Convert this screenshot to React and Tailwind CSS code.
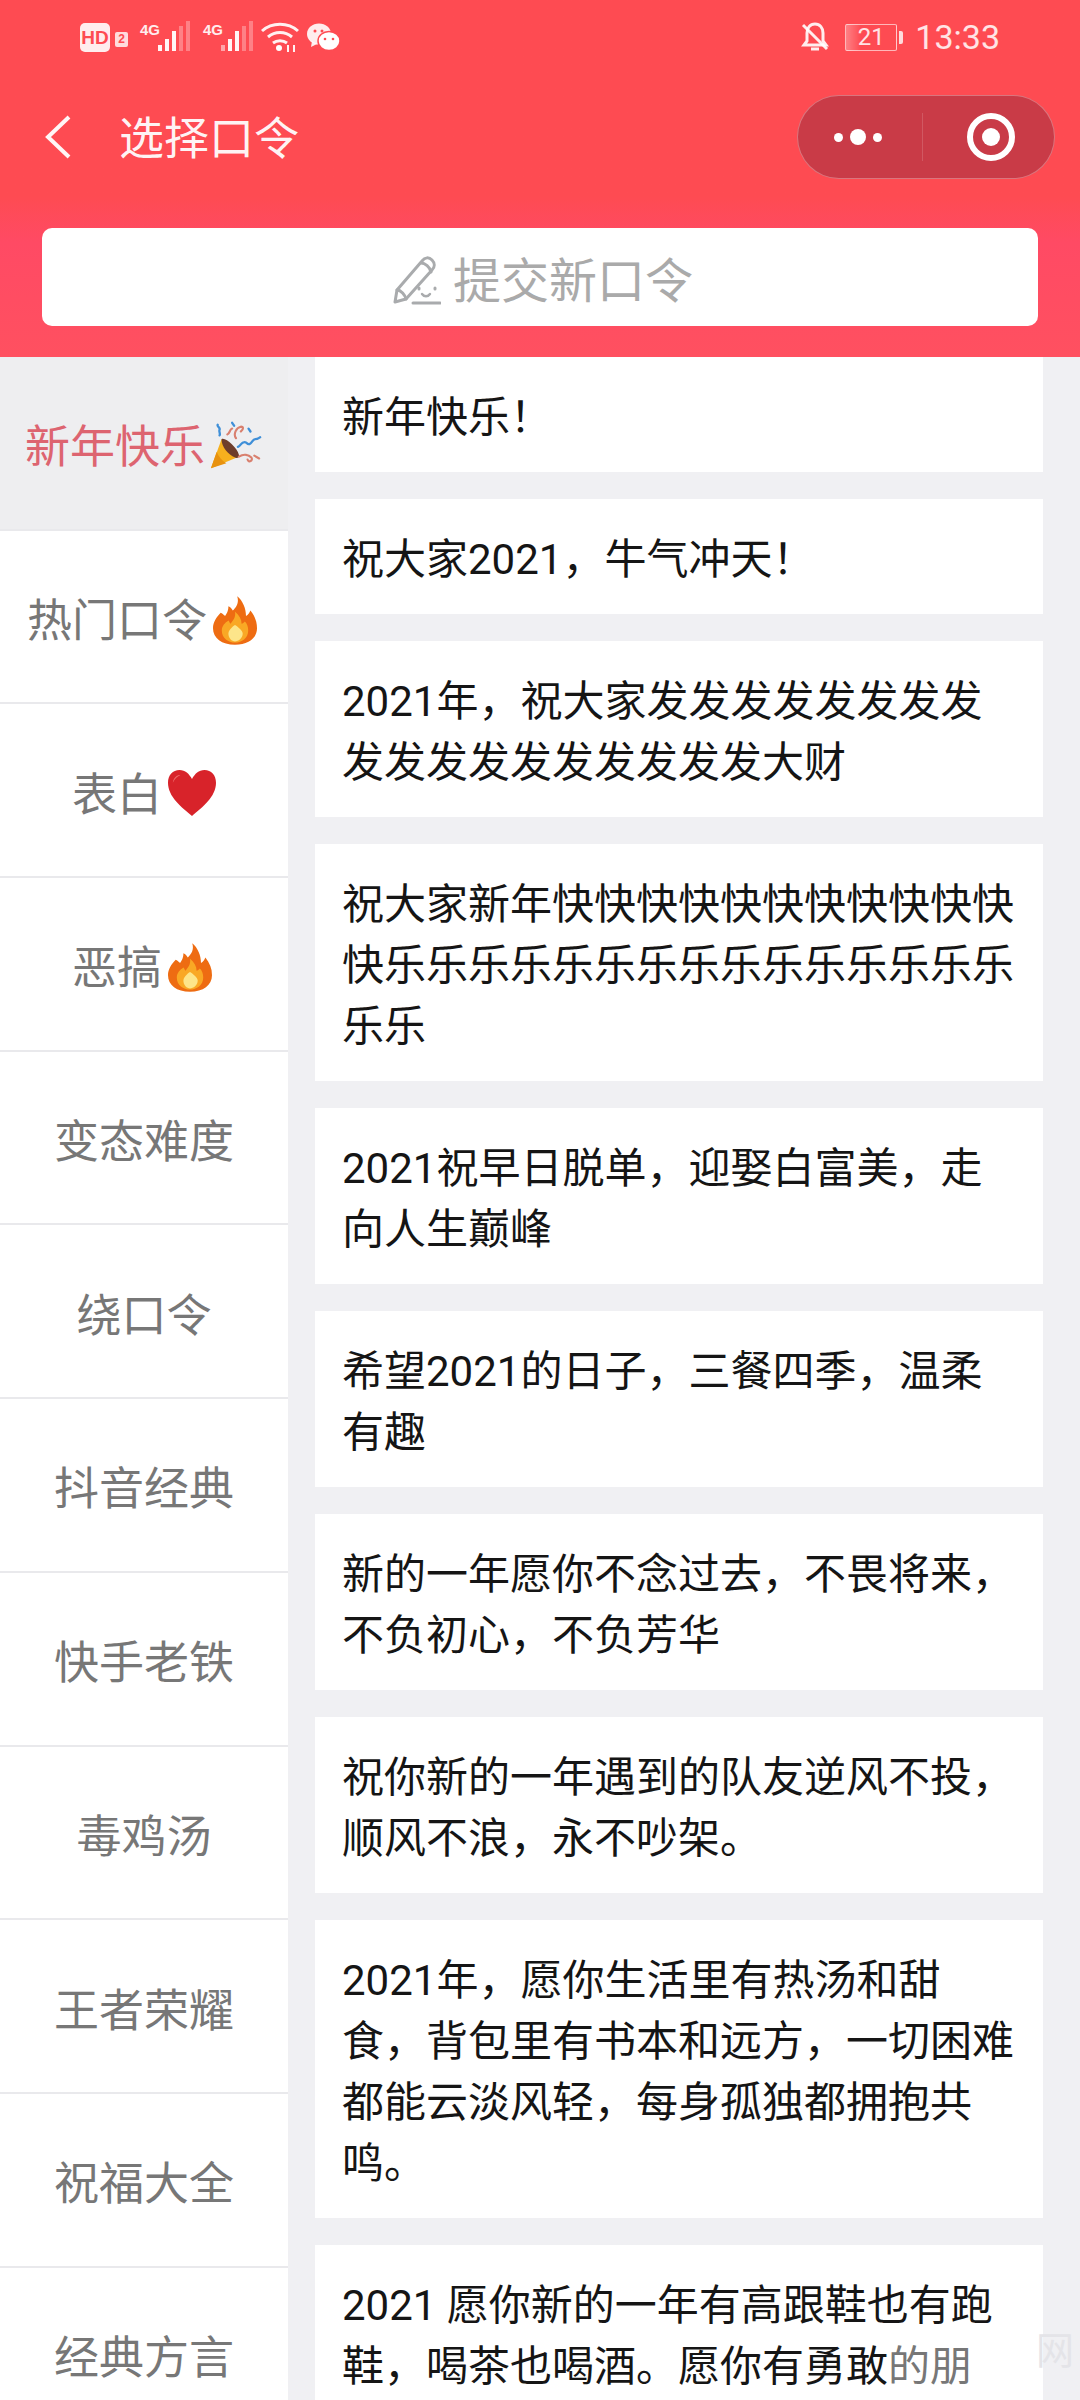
const FONT = "font-['Noto_Sans','Noto_Sans_CJK_SC',sans-serif]";

const menu = [
  { label: "新年快乐", icon: "party", active: true },
  { label: "热门口令", icon: "fire" },
  { label: "表白", icon: "heart" },
  { label: "恶搞", icon: "fire" },
  { label: "变态难度" },
  { label: "绕口令" },
  { label: "抖音经典" },
  { label: "快手老铁" },
  { label: "毒鸡汤" },
  { label: "王者荣耀" },
  { label: "祝福大全" },
  { label: "经典方言" },
];

const phrases = [
  "新年快乐！",
  "祝大家2021，牛气冲天！",
  "2021年，祝大家发发发发发发发发发发发发发发发发发发大财",
  "祝大家新年快快快快快快快快快快快快乐乐乐乐乐乐乐乐乐乐乐乐乐乐乐乐乐",
  "2021祝早日脱单，迎娶白富美，走向人生巅峰",
  "希望2021的日子，三餐四季，温柔有趣",
  "新的一年愿你不念过去，不畏将来，不负初心，不负芳华",
  "祝你新的一年遇到的队友逆风不投，顺风不浪，永不吵架。",
  "2021年，愿你生活里有热汤和甜食，背包里有书本和远方，一切困难都能云淡风轻，每身孤独都拥抱共鸣。",
];

const Fire = ({ className }) => (
  <svg viewBox="0 0 40 44" className={className}>
    <path d="M22 0c2 6-1 10-4 13-1-2-2-3-4-4 0 5-2 7-3 9-1-1-2-2-4-3C3 19 0 24 0 29c0 9 8 15 20 15s20-6 20-15c0-6-2-11-6-16-1 2-2 4-4 5 0-7-3-14-8-18z" fill="#ee6c12" />
    <path d="M20 14c1 5-2 8-4 11-1-1-1-2-2-3-3 2-6 5-6 9 0 7 6 11 12 11s12-4 12-11c0-3-1-6-3-8-1 1-2 2-3 2 0-4-2-8-6-11z" fill="#f9a825" />
    <path d="M20 26c-3 2-6 5-6 8 0 4 3 7 6 7s7-3 7-7c0-3-4-6-7-8z" fill="#fde58a" />
  </svg>
);

const Heart = ({ className }) => (
  <svg viewBox="0 0 50 36" className={className} preserveAspectRatio="none">
    <path d="M25 36C14 29 0 21 0 10 0 4 5 0 12 0c6 0 10 3 13 7 3-4 7-7 13-7 7 0 12 4 12 10 0 11-14 19-25 26z" fill="#d8232a" />
    <path d="M5 10c1-4 4-6 8-6-3 1-6 3-8 6z" fill="#ef6a6a" />
  </svg>
);

const Party = ({ className }) => (
  <svg viewBox="0 0 56 50" className={className} fill="none">
    <path d="M2 49 13 19c6 1 15 10 16 19z" fill="#f6b01e" />
    <path d="M2 49l6-17c2 5 5 9 10 12z" fill="#e8920f" />
    <path d="M13 19c3-3 16 8 18 16 1 3-2 4-4 3-7-3-14-11-14-19z" fill="#6e3d2b" />
    <path d="M9 4c-1 2 3 3 2 5s1 4 0 6M24 2l2 3M41 8l2 3M30 27c3-1 3-5 7-5 3 0 2 3 5 2s3-5 6-5 3-1 5-2" stroke="#3f8fd8" strokeWidth="2.4" strokeLinecap="round" />
    <path d="M19 14c3-1 2-5 5-6M28 18c-3-4 0-11 5-12 3 0 3 3 0 5M31 37c5-3 10-2 13 1 2 3-3 6-4 2M47 36l5 3" stroke="#d9806f" strokeWidth="2.2" strokeLinecap="round" />
  </svg>
);

const menuIcons = {
  party: <Party className="w-[54px] h-[50px] ml-[4px] mt-[5px]" />,
  fire: <Fire className="w-[44px] h-[49px] ml-[6px] mr-[4px] mt-[8px]" />,
  heart: <Heart className="w-[48px] h-[46px] ml-[6px] mt-[6px]" />,
};

const Bars = ({ dim }) => (
  <svg viewBox="0 0 36 32" className="w-[36px] h-[32px] -ml-[2px]">
    <rect x="0" y="24" width="4" height="6" fill="#fff" fillOpacity={dim ? 0.5 : 0.95} />
    <rect x="7" y="18" width="4" height="12" fill="#fff" fillOpacity="0.95" />
    <rect x="14" y="10" width="4" height="20" fill="#fff" fillOpacity="0.95" />
    <rect x="21" y="5" width="4" height="25" fill="#fff" fillOpacity="0.3" />
    <rect x="28" y="0" width="4" height="30" fill="#fff" fillOpacity="0.3" />
  </svg>
);

const Signal = ({ dim }) => (
  <div className="flex items-end">
    <span className="text-[15px] leading-[14px] font-bold text-white/90 mb-[16px] font-['Liberation_Sans_Narrow','Liberation_Sans',sans-serif] w-[20px]">4G</span>
    <Bars dim={dim} />
  </div>
);

const StatusBar = () => (
  <div className="h-[74px] flex items-center justify-between pl-[80px] pr-[80px]">
    <div className="flex items-center">
      <span className="w-[30px] h-[29px] rounded-[5px] bg-white/90 text-[#fe4b52] text-[19px] leading-[29px] font-bold text-center font-['Liberation_Sans',sans-serif]">HD</span>
      <span className="ml-[5px] mt-[4px] w-[13px] h-[15px] rounded-[2px] bg-white/80 text-[#fe4b52] text-[12px] leading-[15px] font-bold text-center font-['Liberation_Sans',sans-serif]">2</span>
      <div className="ml-[12px]"><Signal /></div>
      <div className="ml-[9px]"><Signal dim /></div>
      <svg viewBox="0 0 38 30" className="w-[38px] h-[30px] ml-[4px]" fill="none" stroke="#fff" strokeOpacity="0.92" strokeWidth="3">
        <path d="M1 9c10-9 26-9 36 0" />
        <path d="M7 15c7-6 17-6 24 0" />
        <path d="M12 21c4-3 10-3 14 0" />
        <circle cx="18" cy="26" r="3" fill="#fff" stroke="none" />
        <path d="M27 23v7M33 23v7" strokeWidth="2" />
      </svg>
      <svg viewBox="0 0 33 28" className="w-[33px] h-[28px] ml-[8px]">
        <ellipse cx="12" cy="11" rx="12" ry="10.5" fill="#fff" fillOpacity="0.9" />
        <path d="M5 18l-1 6 6-3z" fill="#fff" fillOpacity="0.9" />
        <ellipse cx="22" cy="18" rx="11" ry="9.5" fill="#fff" stroke="#fe4b52" strokeWidth="1.5" />
        <circle cx="8" cy="8" r="1.5" fill="#fe4b52" />
        <circle cx="15" cy="8" r="1.5" fill="#fe4b52" />
        <circle cx="18" cy="16" r="1.3" fill="#fe4b52" />
        <circle cx="26" cy="16" r="1.3" fill="#fe4b52" />
      </svg>
    </div>
    <div className="flex items-center text-white/85">
      <svg viewBox="0 0 28 30" className="w-[28px] h-[30px]" fill="none" stroke="#fff" strokeOpacity="0.9" strokeWidth="3">
        <path d="M6 11c0-5 3-9 8-9s8 4 8 9v8l3 4H3l3-4z" />
        <path d="M10 27h8" />
        <path d="M2 3l24 24" />
      </svg>
      <div className="ml-[16px] w-[52px] h-[27px] border border-white/60 rounded-[2px] flex items-center justify-center text-[24px] leading-[27px] font-['Roboto',sans-serif] bg-gradient-to-r from-white/30 to-transparent to-30%">21</div>
      <span className="ml-[2px] w-[4px] h-[13px] bg-white/80 rounded-r-[2px]"></span>
      <span className="ml-[12px] text-[34px] leading-[40px] font-['Roboto',sans-serif]">13:33</span>
    </div>
  </div>
);

const Capsule = () => (
  <div className="w-[258px] h-[84px] rounded-full bg-[#c93b47] border border-white/30 flex items-center">
    <div className="flex-1 flex items-center justify-center gap-[7px] -ml-[3px]">
      <span className="w-[9px] h-[9px] rounded-full bg-white"></span>
      <span className="w-[16px] h-[16px] rounded-full bg-white"></span>
      <span className="w-[9px] h-[9px] rounded-full bg-white"></span>
    </div>
    <div className="w-[1px] h-[48px] bg-white/15"></div>
    <div className="flex-1 flex items-center justify-center pl-[5px]">
      <div className="w-[48px] h-[48px] rounded-full border-[6px] border-white flex items-center justify-center">
        <span className="w-[18px] h-[18px] rounded-full bg-white"></span>
      </div>
    </div>
  </div>
);

const PenIcon = () => (
  <svg viewBox="0 0 48 50" className="w-[48px] h-[50px]" fill="none" stroke="#a9abad" strokeWidth="3" strokeLinejoin="round" strokeLinecap="round">
    <path d="M2 47 4 35 29 6c3-4 7-4 10-1s3 7 0 10L13 44z" />
    <path d="M4 35c4 0 8 5 9 9" />
    <path d="M28 8c4 0 9 4 10 9" />
    <path d="M20 48h27" />
    <path d="M29 39c2 3 6 3 8 0" strokeWidth="2.4" />
    <path d="M26 33v1M42 33v1" />
  </svg>
);

const MenuRow = ({ label, icon, active }) => (
  <div className={`h-[173.7px] flex items-center justify-center border-b-2 border-[#e9e9ec] ${active ? "bg-[#eeeef0]" : "bg-white"}`}>
    <span className={`mt-[6px] text-[45px] leading-none ${active ? "text-[#dd6470]" : "text-[#777777]"}`}>{label}</span>
    {icon && menuIcons[icon]}
  </div>
);

const Card = ({ children, grow }) => (
  <div className={`bg-white pl-[27px] pr-[28px] pt-[30px] pb-[24px] text-[42px] leading-[61px] text-[#151515] font-['Roboto','Noto_Sans_CJK_SC',sans-serif] ${grow ? "flex-1" : ""}`}>
    {children}
  </div>
);

export default function App() {
  return (
    <div className={`w-[1080px] h-[2400px] overflow-hidden relative flex flex-col bg-[#f0f0f3] ${FONT}`}>
      {/* 顶部 */}
      <div className="h-[357px] shrink-0 bg-gradient-to-b from-[#fe4b52] from-[55%] via-[#ff4a64] via-[68%] to-[#ff5060]">
        <StatusBar />
        <div className="mt-[21px] flex items-center justify-between pl-[45px] pr-[25px]">
          <div className="flex items-center">
            <svg viewBox="0 0 26 44" className="w-[26px] h-[44px]" fill="none" stroke="#fff" strokeWidth="4" strokeOpacity="0.95">
              <path d="M24 2 3 22l21 20" />
            </svg>
            <span className="ml-[48px] text-[45px] leading-none text-white/95">选择口令</span>
          </div>
          <Capsule />
        </div>
        <div className="mt-[49px] mx-[42px] h-[98px] bg-white rounded-[10px] flex items-center justify-center">
          <div className="flex items-center ml-[6px] mt-[6px] gap-[12px]">
            <PenIcon />
            <span className="text-[48px] leading-none text-[#aaaaaa]">提交新口令</span>
          </div>
        </div>
      </div>

      <div className="flex flex-1 min-h-0">
        {/* 左侧分类 */}
        <div className="w-[288px] shrink-0">
          {menu.map((item) => (
            <MenuRow key={item.label} {...item} />
          ))}
        </div>

        {/* 口令列表 */}
        <div className="w-[728px] ml-[27px] flex flex-col gap-[27px]">
          {phrases.map((text) => (
            <Card key={text}>{text}</Card>
          ))}
          <Card grow>
            2021 愿你新的一年有高跟鞋也有跑鞋，喝茶也喝酒。愿你有勇敢<span className="text-[#777777]">的朋</span>
          </Card>
        </div>
      </div>

      <span className="absolute right-[6px] top-[2330px] text-[38px] leading-none text-[#e4e4e8]">网</span>
    </div>
  );
}
